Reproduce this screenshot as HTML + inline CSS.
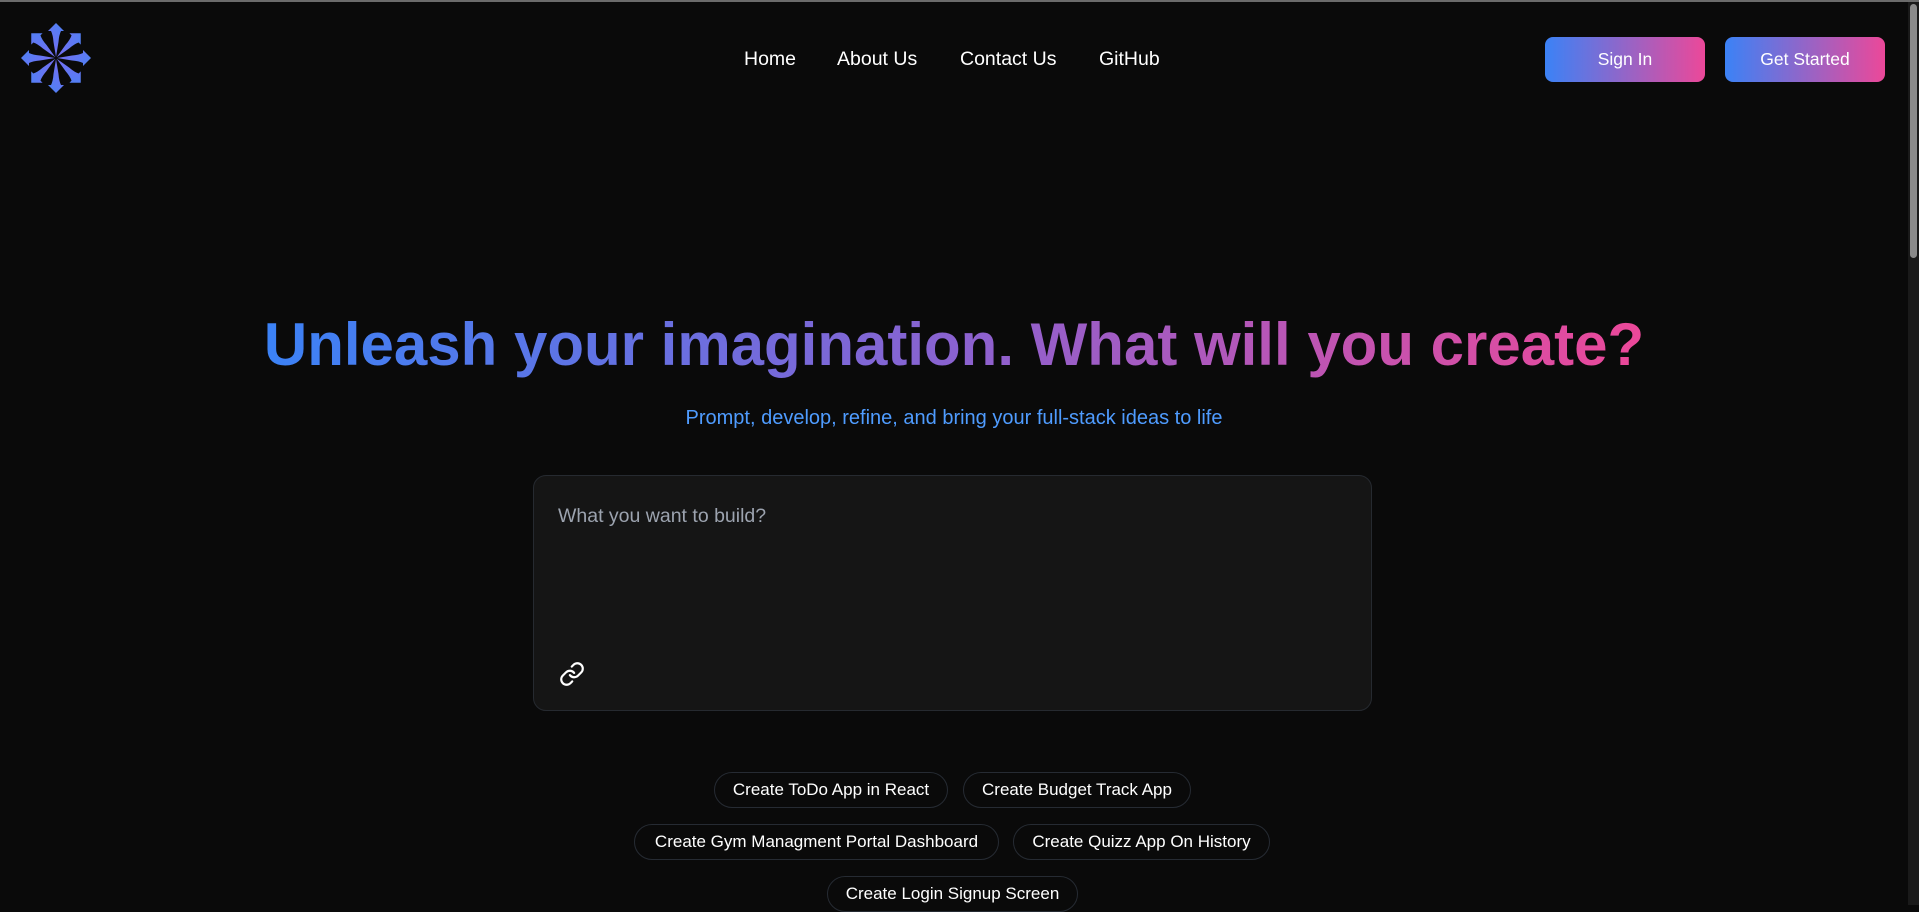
<!DOCTYPE html>
<html><head><meta charset="utf-8"><style>
*{margin:0;padding:0;box-sizing:border-box}
html,body{width:1919px;height:905px;overflow:hidden;background:#0a0a0a;font-family:"Liberation Sans",sans-serif;color:#fff}
.topline{position:absolute;left:0;top:0;width:1919px;height:2px;background:#6b6b6b}
.sb{position:absolute;right:0;top:2px;width:11px;height:903px;background:#1a1a1a}
.sb div{position:absolute;left:2px;top:2px;width:7px;height:254px;background:#8a8a8a;border-radius:4px}
.nav a{position:absolute;top:48px;font-size:19.5px;color:#fff;text-decoration:none}
.btn{position:absolute;top:37px;width:160px;height:45px;border-radius:8px;background:linear-gradient(90deg,#3b82f6,#ec4899);font-size:17.5px;display:flex;align-items:center;justify-content:center}
h1{position:absolute;left:0;width:1908px;top:309px;text-align:center;font-size:60px;font-weight:700;line-height:72px}
h1 span{background:linear-gradient(90deg,#3b82f6,#8a62d0 50%,#ec4899);-webkit-background-clip:text;background-clip:text;color:transparent}
.sub{position:absolute;left:0;width:1908px;top:407px;text-align:center;font-size:20px;color:#4f9cff}
.box{position:absolute;left:533px;top:475px;width:839px;height:236px;background:#151515;border:1px solid #262a30;border-radius:13px}
.ph{position:absolute;left:24px;top:29px;font-size:19.5px;color:#9ca3af}
.chip{position:absolute;height:36px;border:1px solid #262b33;border-radius:18px;font-size:17px;display:flex;align-items:center;justify-content:center;white-space:nowrap}
</style></head><body>
<div class="topline"></div>
<svg style="position:absolute;left:18px;top:20px" width="76" height="76" viewBox="-38 -38 76 76">
<defs><linearGradient id="g" gradientUnits="userSpaceOnUse" x1="30" y1="-30" x2="-30" y2="30"><stop offset="0" stop-color="#3b8bf6"/><stop offset="1" stop-color="#b050ee"/></linearGradient></defs>
<g fill="url(#g)">
<g id="arm"><path d="M0,-35 L8,-27 L5,-27 Q3,-23 2.5,-16 L0,-1 L-2.5,-16 Q-3,-23 -5,-27 L-8,-27 Z"/></g>
<use href="#arm" transform="rotate(45)"/><use href="#arm" transform="rotate(90)"/><use href="#arm" transform="rotate(135)"/>
<use href="#arm" transform="rotate(180)"/><use href="#arm" transform="rotate(225)"/><use href="#arm" transform="rotate(270)"/><use href="#arm" transform="rotate(315)"/>
</g></svg>
<div class="nav"><a style="left:744px">Home</a><a style="left:837px">About Us</a><a style="left:960px">Contact Us</a><a style="left:1099px">GitHub</a></div>
<div class="btn" style="left:1545px">Sign In</div>
<div class="btn" style="left:1725px">Get Started</div>
<h1><span>Unleash your imagination. What will you create?</span></h1>
<div class="sub">Prompt, develop, refine, and bring your full-stack ideas to life</div>
<div class="box"><div class="ph">What you want to build?</div>
<svg style="position:absolute;left:25px;top:185px" width="26" height="26" viewBox="0 0 24 24" fill="none" stroke="#fff" stroke-width="2" stroke-linecap="round" stroke-linejoin="round"><path d="M10 13a5 5 0 0 0 7.54.54l3-3a5 5 0 0 0-7.070-7.07l-1.72 1.71"/><path d="M14 11a5 5 0 0 0-7.54-.54l-3 3a5 5 0 0 0 7.07 7.07l1.71-1.71"/></svg>
</div>
<div class="chip" style="left:714px;top:772px;width:234px">Create ToDo App in React</div>
<div class="chip" style="left:963px;top:772px;width:228px">Create Budget Track App</div>
<div class="chip" style="left:634px;top:824px;width:365px">Create Gym Managment Portal Dashboard</div>
<div class="chip" style="left:1013px;top:824px;width:257px">Create Quizz App On History</div>
<div class="chip" style="left:827px;top:876px;width:251px">Create Login Signup Screen</div>
<div class="sb"><div></div></div>
</body></html>
